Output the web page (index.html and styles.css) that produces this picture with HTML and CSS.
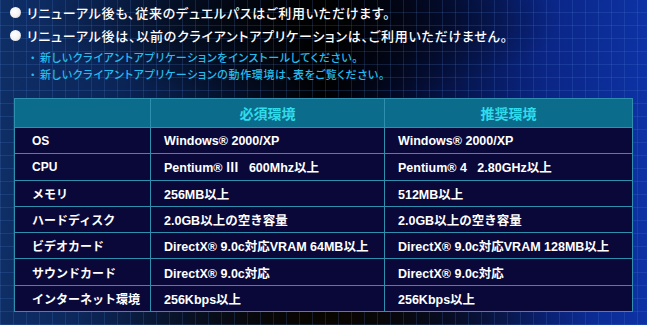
FILE: index.html
```html
<!DOCTYPE html>
<html lang="ja">
<head>
<meta charset="utf-8">
<link rel="stylesheet" href="styles.css">
</head>
<body>
<div class="page">
  <ul class="notes">
    <li class="note"><span class="dot"></span>リニューアル後も、従来のデュエルパスはご利用いただけます。</li>
    <li class="note"><span class="dot"></span>リニューアル後は、以前のクライアントアプリケーションは、ご利用いただけません。</li>
  </ul>
  <ul class="subnotes">
    <li class="subnote"><span class="mark">・</span>新しいクライアントアプリケーションをインストールしてください。</li>
    <li class="subnote"><span class="mark">・</span>新しいクライアントアプリケーションの動作環境は、表をご覧ください。</li>
  </ul>
  <table class="spec">
    <colgroup>
      <col class="c1"><col class="c2"><col class="c3">
    </colgroup>
    <thead>
      <tr><th></th><th>必須環境</th><th>推奨環境</th></tr>
    </thead>
    <tbody>
      <tr><td>OS</td><td>Windows® 2000/XP</td><td>Windows® 2000/XP</td></tr>
      <tr><td>CPU</td><td>Pentium® Ⅲ&nbsp;&nbsp;&nbsp;600Mhz以上</td><td>Pentium® 4&nbsp;&nbsp;&nbsp;2.80GHz以上</td></tr>
      <tr><td>メモリ</td><td>256MB以上</td><td>512MB以上</td></tr>
      <tr><td>ハードディスク</td><td>2.0GB以上の空き容量</td><td>2.0GB以上の空き容量</td></tr>
      <tr><td>ビデオカード</td><td>DirectX® 9.0c対応VRAM 64MB以上</td><td>DirectX® 9.0c対応VRAM 128MB以上</td></tr>
      <tr><td>サウンドカード</td><td>DirectX® 9.0c対応</td><td>DirectX® 9.0c対応</td></tr>
      <tr><td>インターネット環境</td><td>256Kbps以上</td><td>256Kbps以上</td></tr>
    </tbody>
  </table>
</div>
</body>
</html>
```

FILE: styles.css
```css
html, body {
  margin: 0;
  padding: 0;
}
body {
  width: 647px;
  height: 325px;
  overflow: hidden;
  font-family: "Noto Sans CJK JP", "Liberation Sans", sans-serif;
  color: #fff;
  background-color: #020614;
  background-image:
    repeating-linear-gradient(90deg, rgba(80,130,210,0.2) 0 1px, transparent 1px 13px),
    repeating-linear-gradient(0deg, rgba(80,130,210,0.2) 0 1px, transparent 1px 13px),
    radial-gradient(ellipse 260px 80px at 300px 20px, rgba(0,0,0,0.85), rgba(0,0,0,0) 100%),
    radial-gradient(ellipse 260px 60px at 330px 325px, rgba(10,6,0,0.95), rgba(0,0,0,0) 100%),
    linear-gradient(90deg, #0e2e66 0%, #0b2558 18%, #04102a 36%, #000 50%, #030a28 62%, #0a2584 84%, #0d32a4 100%);
}
.page {
  padding-top: 1px;
}
.notes {
  list-style: none;
  margin: 0;
  padding: 0 0 0 10px;
}
.note {
  display: flex;
  align-items: center;
  gap: 6px;
  height: 23px;
  font-size: 13px;
  font-weight: 500;
  font-feature-settings: "palt";
  letter-spacing: 0.75px;
}
.dot {
  width: 11px;
  height: 11px;
  border-radius: 50%;
  background: radial-gradient(circle at 40% 40%, #fff 0%, #f2f2f2 55%, #bbb 100%);
  flex: none;
}
.subnotes {
  list-style: none;
  margin: 2px 0 0;
  padding: 0 0 0 30px;
  color: #26bcee;
}
.subnote {
  height: 17px;
  line-height: 17px;
  font-size: 11px;
  font-weight: 500;
  font-feature-settings: "palt";
  letter-spacing: 0.65px;
}
.mark {
  display: inline-block;
  width: 10px;
}
.spec {
  margin: 15px 0 0 14px;
  border-collapse: collapse;
  table-layout: fixed;
  width: 618px;
}
.c1 { width: 136px; }
.c2 { width: 234px; }
.c3 { width: 248px; }
.spec th, .spec td {
  border: 1px solid #2f8fae;
  padding: 0 0 0 13px;
  text-align: left;
  white-space: nowrap;
}
.spec th {
  background: #0c6c8c;
  color: #2fdcec;
  font-size: 14px;
  font-weight: 700;
  height: 28px;
  text-align: center;
  padding: 0;
}
.spec td {
  background: #0a0838;
  color: #fff;
  font-family: "Liberation Sans", "Noto Sans CJK JP", sans-serif;
  font-size: 12.5px;
  font-weight: 700;
  height: 25.3px;
}
.spec td:first-child {
  padding-left: 17px;
  font-size: 12px;
}
```
